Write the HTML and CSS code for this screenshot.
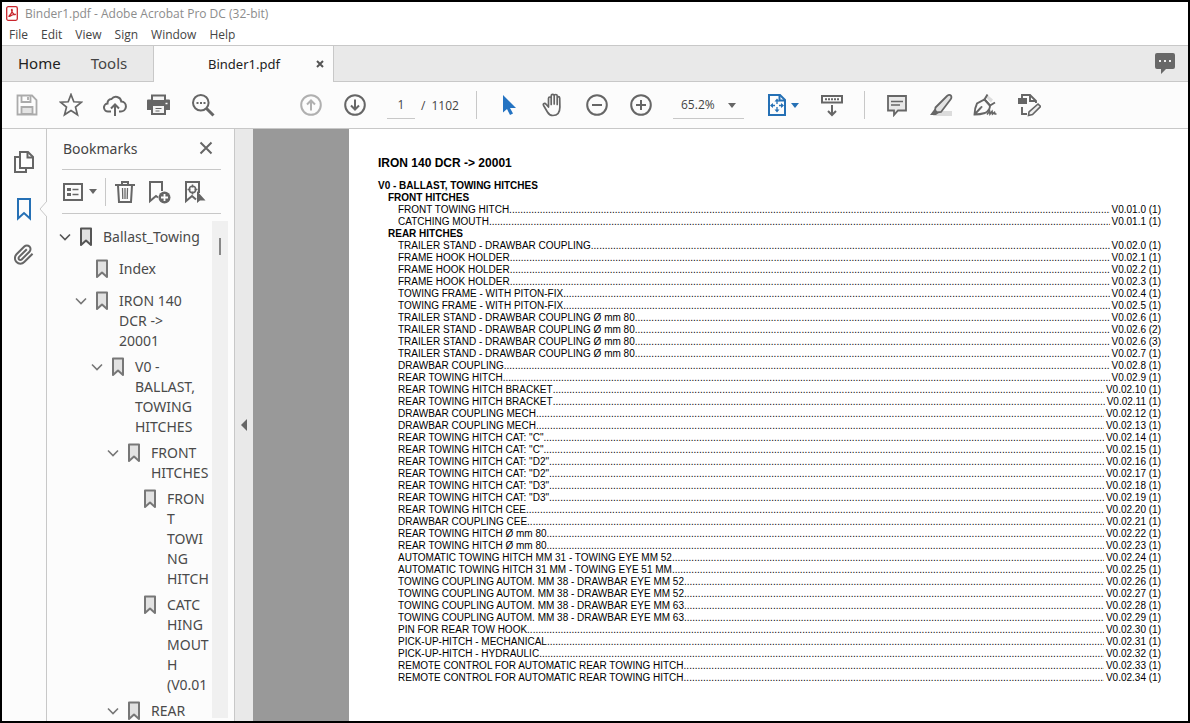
FILE: index.html
```html
<!DOCTYPE html>
<html lang="en">
<head>
<meta charset="utf-8">
<title>Binder1.pdf - Adobe Acrobat Pro DC (32-bit)</title>
<link rel="stylesheet" href="styles.css">
</head>
<body>
<svg class="sprite" aria-hidden="true">
  <symbol id="mark" viewBox="0 0 14 20"><path d="M2 1.500h10v16.500l-5-4.500-5 4.500z" fill="#e2e2e2" stroke="currentColor" stroke-width="2" stroke-linejoin="round"/></symbol>
  <symbol id="chev" viewBox="0 0 12 8"><path d="M1 1.500l5 5 5-5" fill="none" stroke="currentColor" stroke-width="1.600"/></symbol>
  <symbol id="caret" viewBox="0 0 8 5"><path d="M0 0h8l-4 5z" fill="currentColor"/></symbol>
</svg>
<div class="window">
  <header class="titlebar">
    <svg class="logo" viewBox="0 0 12 15"><rect x=".7" y=".7" width="10.600" height="13.600" rx="1.500" fill="#fff" stroke="#c9252d" stroke-width="1.300"/><path d="M6 3.300c.8 1.500-.6 4.300-3 7 .7.700 2.300-1.900 6.300-1.900-.2 1-3.500-1.400-3.800-4.300 0-.6.300-.8.500-.8z" fill="none" stroke="#c9252d" stroke-width="1.300"/></svg>
    <span>Binder1.pdf - Adobe Acrobat Pro DC (32-bit)</span>
  </header>
  <nav class="menubar" aria-label="Menu">
    <button>File</button><button>Edit</button><button>View</button><button>Sign</button><button>Window</button><button>Help</button>
  </nav>
  <div class="tabs">
    <div class="tabs-main"><button class="home">Home</button><button>Tools</button></div>
    <div class="tab-file">
      <button class="tab-name">Binder1.pdf</button>
      <button class="tab-close" aria-label="Close tab"><svg width="8" height="8" viewBox="0 0 8 8"><path d="M1 1l6 6M7 1l-6 6" stroke="#555" stroke-width="2"/></svg></button>
    </div>
    <div class="tabs-rest">
      <button aria-label="Comments"><svg width="20" height="21" viewBox="0 0 20 21"><path d="M2 0h16q2 0 2 2v12q0 2-2 2h-7l-5 5v-5h-4q-2 0-2-2v-12q0-2 2-2z" fill="#686868"/><path d="M4 7h2v2h-2zM9 7h2v2h-2zM14 7h2v2h-2z" fill="#eee"/></svg></button>
    </div>
  </div>

  <div class="toolbar">
    <div class="group">
      <button class="tool" aria-label="Save"><svg viewBox="0 0 24 24" fill="none" stroke="#ababab" stroke-width="1.800"><path d="M2.500 2.500h14.500l4.500 4.500v14.500h-19z"/><path d="M6.500 3v6h9v-6M13 4v3"/><path d="M6.500 21v-7h11v7z" fill="#e4e4e4"/></svg></button>
      <button class="tool" aria-label="Star"><svg viewBox="0 0 24 24" fill="none" stroke="#666" stroke-width="1.700"><path d="M12 1.500l2.800 7.300 7.700.4-6 4.900 2 7.700-6.500-4.300-6.500 4.300 2-7.700-6-4.900 7.700-.4z"/></svg></button>
      <button class="tool" aria-label="Upload"><svg viewBox="0 0 24 24" fill="none" stroke="#666" stroke-width="2"><path d="M8 18.500h-2.500a4 4 0 0 1-1-8 4.500 4.500 0 0 1 4-4.500 5.500 5.500 0 0 1 9.800 2.500 5 5 0 0 1-.8 10h-1.500"/><path d="M12 23v-11M8 15.500l4-4 4 4"/></svg></button>
      <button class="tool" aria-label="Print"><svg viewBox="0 0 24 24"><path d="M4 1.500h15v5h3q1 0 1 1v9.500h-4v5h-15v-5h-4v-9.500q0-1 1-1h3z" fill="#666"/><path d="M6 3.500h11v3.500h-11zM6 13h11v7h-11z" fill="#f4f4f4"/><path d="M8.500 15.500h6M8.500 18h4" stroke="#666" stroke-width="1"/><path d="M18.500 10.500h2" stroke="#fff" stroke-width="1.500"/></svg></button>
      <button class="tool" aria-label="Find"><svg viewBox="0 0 24 24" fill="none" stroke="#666"><circle cx="9.800" cy="9.800" r="7.800" stroke-width="2"/><path d="M15.500 15.500l7 7" stroke-width="3"/><path d="M5.500 10h2M9 10h2M12.500 10h2" stroke-width="2"/></svg></button>
    </div>
    <div class="group paging">
      <button class="tool" aria-label="Previous page"><svg viewBox="0 0 24 24" fill="none" stroke="#b0b0b0" stroke-width="2"><circle cx="12" cy="12" r="9.800"/><path d="M12 17.500v-10M8 11.500l4-4 4 4"/></svg></button>
      <button class="tool" aria-label="Next page"><svg viewBox="0 0 24 24" fill="none" stroke="#666" stroke-width="2"><circle cx="12" cy="12" r="9.800"/><path d="M12 6.500v10M8 12.500l4 4 4-4"/></svg></button>
      <input class="page-no" type="text" value="1" aria-label="Page number">
      <span class="page-sep">/</span><span>1102</span>
    </div>
    <div class="group ruled">
      <button class="tool" aria-label="Select"><svg viewBox="0 0 24 24"><path d="M6 2v17.500l4-3.500 3 6 3-1.500-3-5.500h6z" fill="#2473c2"/></svg></button>
      <button class="tool" aria-label="Pan"><svg viewBox="0 0 24 24" fill="none" stroke="#666" stroke-width="1.700" stroke-linecap="round" stroke-linejoin="round"><path d="M6.500 14v-8.500q0-1.500 1.300-1.500t1.400 1.500v6-8.500q0-1.600 1.500-1.600t1.500 1.600v8-8q0-1.500 1.500-1.500t1.500 1.500v8.500-6.500q0-1.300 1.200-1.300t1.300 1.300l.2 9q0 8.500-7 8.500-3.500 0-5.500-3.500l-3.800-6.500q-.8-1.500.5-2 1.200-.3 2.200 1z" transform="translate(1 0)"/></svg></button>
      <button class="tool" aria-label="Zoom out"><svg viewBox="0 0 24 24" fill="none" stroke="#666" stroke-width="2"><circle cx="12" cy="12" r="9.800"/><path d="M7 12h10"/></svg></button>
      <button class="tool" aria-label="Zoom in"><svg viewBox="0 0 24 24" fill="none" stroke="#666" stroke-width="2"><circle cx="12" cy="12" r="9.800"/><path d="M7 12h10M12 7v10"/></svg></button>
      <div class="zoom"><select aria-label="Zoom level"><option>65.2%</option></select><svg class="caret"><use href="#caret"/></svg></div>
      <button class="tool fit" aria-label="Fit page"><svg viewBox="0 0 24 24" fill="none" stroke="#2570b5" stroke-width="2"><path d="M4 2h11l5 5v15h-16z"/><path d="M14.500 2v5.500h5.500"/><path d="M12 7v4M12 14v4M6 12.500h4M14 12.500h4" stroke-width="1.300"/><path d="M12 5.500l2.500 3h-5zM12 19.500l2.500-3h-5zM5 12.500l3-2.500v5zM19 12.500l-3-2.500v5z" fill="#2570b5" stroke="none"/></svg><svg class="caret"><use href="#caret"/></svg></button>
      <button class="tool" aria-label="Scroll mode"><svg viewBox="0 0 24 24" fill="none" stroke="#666" stroke-width="2"><path d="M2 3h20v6.500h-20z"/><path d="M5 6.300h14" stroke-dasharray="2 1"/><path d="M12 12v10M8 18l4 4 4-4"/></svg></button>
    </div>
    <div class="group ruled">
      <button class="tool" aria-label="Comment"><svg viewBox="0 0 24 24" fill="#e8e8e8" stroke="#666" stroke-width="1.800"><path d="M3 3h18v14.500h-8l-4 4.500v-4.500h-6z"/><path d="M6 8.500h12M6 12h9" stroke-width="1.300"/></svg></button>
      <button class="tool" aria-label="Highlight"><svg viewBox="0 0 24 24"><path d="M6 18h17v5h-19z" fill="#dcdcdc"/><path d="M6.500 14.500l11.500-11.500q2.500-2 4-.3 1 1.800-.5 3.800l-9.500 12.500-4 .5-2-2z" fill="#e3e3e3" stroke="#666" stroke-width="1.800"/><path d="M1 22l4.500-6 4 4-2.500 2z" fill="#666"/></svg></button>
      <button class="tool" aria-label="Sign"><svg viewBox="0 0 24 24" fill="none" stroke="#666" stroke-width="1.900"><path d="M14.500 2l5.500 4.500-2 3-5-5z" fill="#ddd" stroke="none"/><path d="M1.500 21.500q0-6 2.500-11l7.500-4 5.500 6q0 5-5 7.500-5 1.500-10.500 1.500zM1.500 21.500l6.500-7"/><path d="M14.500 1.500l-3 5 5.500 6 5-3"/><circle cx="8.500" cy="14" r="1" fill="#666" stroke="none"/><path d="M14 21.500l2.500-3.500.5 3 2-2.500.5 2.500 2-1.500.5 1.500h1.500" stroke-width="1.700"/></svg></button>
      <button class="tool" aria-label="Edit PDF"><svg viewBox="0 0 24 24" fill="none" stroke="#666" stroke-width="1.900"><path d="M5 6v-4h8l6 6v2M13 2v6h6M5 14v7h5"/><path d="M1 5h9v6h-9z" fill="#666" stroke="none"/><path d="M11.500 22.500l.5-3.500 9-8 2.500 2.500-8 8z" fill="#eee" stroke-width="1.600"/></svg></button>
    </div>
  </div>

  <div class="body">
    <nav class="rail" aria-label="Panels">
      <button aria-label="Page thumbnails"><svg width="20" height="24" viewBox="0 0 20 24" fill="none" stroke="#666" stroke-width="2"><path d="M5 7h-4v15h11v-3"/><path d="M6 2h8l5 5v11h-13z" fill="#fff"/><path d="M13.500 2v5.500h5.500"/></svg></button>
      <button class="on" aria-label="Bookmarks"><svg width="16" height="24" viewBox="0 0 16 24" fill="none" stroke="#2570b5" stroke-width="2"><path d="M2 2h12v19.500l-6-5.500-6 5.500z"/></svg></button>
      <button aria-label="Attachments"><svg width="20" height="22" viewBox="1 1 22 23" fill="none" stroke="#666" stroke-width="2.200"><path d="M21.440 11.050l-9.190 9.190a6 6 0 0 1-8.490-8.490l8.570-8.570A4 4 0 1 1 18 8.840l-8.590 8.570a2 2 0 0 1-2.830-2.830l8.490-8.480"/></svg></button>
    </nav>
    <aside class="panel">
      <svg class="notch" width="8" height="16" viewBox="0 0 8 16"><path d="M8 0l-7 8 7 8" fill="#fcfcfc" stroke="#c8c8c8"/></svg>
      <div class="panel-head"><h2>Bookmarks</h2><button aria-label="Close panel"><svg width="14" height="14" viewBox="0 0 14 14"><path d="M1.500 1.500l11 11M12.500 1.500l-11 11" stroke="#666" stroke-width="2"/></svg></button></div>
      <div class="panel-tools">
        <button class="options" aria-label="Options"><svg width="20" height="18" viewBox="0 0 20 18"><path d="M1 1h18v16h-18z" fill="none" stroke="#666" stroke-width="2"/><path d="M4 5h4v3h-4zM4 10h4v3h-4z" fill="#666"/><path d="M9.500 6.500h6M9.500 11.500h6" stroke="#666" stroke-width="1.500"/></svg><svg class="caret"><use href="#caret"/></svg></button>
        <button class="bin" aria-label="Delete"><svg width="20" height="24" viewBox="0 0 20 24" fill="none" stroke="#666" stroke-width="2"><path d="M0 5h20M7 4.500v-2.500h6v2.500M3 5.500l1 16.500h12l1-16.500"/><path d="M7.500 8l.3 11M10 8v11M12.500 8l-.3 11" stroke-width="1.300"/></svg></button>
        <button aria-label="New bookmark"><svg width="24" height="24" viewBox="0 0 24 24"><path d="M15 11v-9h-12v19l6-5 2 1.500" fill="none" stroke="#666" stroke-width="2"/><circle cx="17.500" cy="17.500" r="6" fill="#666"/><path d="M14 17.500h7M17.500 14v7" stroke="#fff" stroke-width="1.800"/></svg></button>
        <button aria-label="Find bookmark"><svg width="24" height="24" viewBox="0 0 24 24" fill="none" stroke="#666"><path d="M16 13v-11h-13v19l6-5 4 3.500" stroke-width="2"/><circle cx="9.500" cy="9.500" r="3.200" stroke-width="1.500"/><path d="M9.500 4.500v3M9.500 11.500v3M4.500 9.500h3M11.500 9.500h3" stroke-width="1.500"/><path d="M14 11v12l3-2.500h5.500z" fill="#666" stroke="none"/></svg></button>
      </div>
      <div class="tree-area">
        <ul class="tree">
          <li class="l1 dark"><svg class="chev"><use href="#chev"/></svg><svg class="mark"><use href="#mark"/></svg><a href="#">Ballast_Towing</a></li>
          <li class="l2"><span class="chev"></span><svg class="mark"><use href="#mark"/></svg><a href="#">Index</a></li>
          <li class="l2"><svg class="chev"><use href="#chev"/></svg><svg class="mark"><use href="#mark"/></svg><a href="#">IRON 140<br>DCR -&gt;<br>20001</a></li>
          <li class="l3"><svg class="chev"><use href="#chev"/></svg><svg class="mark"><use href="#mark"/></svg><a href="#">V0 -<br>BALLAST,<br>TOWING<br>HITCHES</a></li>
          <li class="l4"><svg class="chev"><use href="#chev"/></svg><svg class="mark"><use href="#mark"/></svg><a href="#">FRONT<br>HITCHES</a></li>
          <li class="l5"><span class="chev"></span><svg class="mark"><use href="#mark"/></svg><a href="#">FRON<br>T<br>TOWI<br>NG<br>HITCH</a></li>
          <li class="l5"><span class="chev"></span><svg class="mark"><use href="#mark"/></svg><a href="#">CATC<br>HING<br>MOUT<br>H<br>(V0.01</a></li>
          <li class="l4"><svg class="chev"><use href="#chev"/></svg><svg class="mark"><use href="#mark"/></svg><a href="#">REAR</a></li>
        </ul>
        <div class="scroll"><span class="thumb"></span></div>
      </div>
    </aside>
    <button class="collapse" aria-label="Collapse panel"><svg width="6" height="12" viewBox="0 0 6 12"><path d="M6 0v12l-6-6z" fill="#666"/></svg></button>
    <main class="canvas">
      <article class="page">
        <h1>IRON 140 DCR -&gt; 20001</h1>
        <h2>V0 - BALLAST, TOWING HITCHES</h2>
        <h3>FRONT HITCHES</h3>
        <ul class="toc">
          <li><span>FRONT TOWING HITCH</span><b>V0.01.0 (1)</b></li>
          <li><span>CATCHING MOUTH</span><b>V0.01.1 (1)</b></li>
        </ul>
        <h3>REAR HITCHES</h3>
        <ul class="toc">
          <li><span>TRAILER STAND - DRAWBAR COUPLING</span><b>V0.02.0 (1)</b></li>
          <li><span>FRAME HOOK HOLDER</span><b>V0.02.1 (1)</b></li>
          <li><span>FRAME HOOK HOLDER</span><b>V0.02.2 (1)</b></li>
          <li><span>FRAME HOOK HOLDER</span><b>V0.02.3 (1)</b></li>
          <li><span>TOWING FRAME - WITH PITON-FIX</span><b>V0.02.4 (1)</b></li>
          <li><span>TOWING FRAME - WITH PITON-FIX</span><b>V0.02.5 (1)</b></li>
          <li><span>TRAILER STAND - DRAWBAR COUPLING Ø mm 80</span><b>V0.02.6 (1)</b></li>
          <li><span>TRAILER STAND - DRAWBAR COUPLING Ø mm 80</span><b>V0.02.6 (2)</b></li>
          <li><span>TRAILER STAND - DRAWBAR COUPLING Ø mm 80</span><b>V0.02.6 (3)</b></li>
          <li><span>TRAILER STAND - DRAWBAR COUPLING Ø mm 80</span><b>V0.02.7 (1)</b></li>
          <li><span>DRAWBAR COUPLING</span><b>V0.02.8 (1)</b></li>
          <li><span>REAR TOWING HITCH</span><b>V0.02.9 (1)</b></li>
          <li><span>REAR TOWING HITCH BRACKET</span><b>V0.02.10 (1)</b></li>
          <li><span>REAR TOWING HITCH BRACKET</span><b>V0.02.11 (1)</b></li>
          <li><span>DRAWBAR COUPLING MECH</span><b>V0.02.12 (1)</b></li>
          <li><span>DRAWBAR COUPLING MECH</span><b>V0.02.13 (1)</b></li>
          <li><span>REAR TOWING HITCH CAT: "C"</span><b>V0.02.14 (1)</b></li>
          <li><span>REAR TOWING HITCH CAT: "C"</span><b>V0.02.15 (1)</b></li>
          <li><span>REAR TOWING HITCH CAT: "D2"</span><b>V0.02.16 (1)</b></li>
          <li><span>REAR TOWING HITCH CAT: "D2"</span><b>V0.02.17 (1)</b></li>
          <li><span>REAR TOWING HITCH CAT: "D3"</span><b>V0.02.18 (1)</b></li>
          <li><span>REAR TOWING HITCH CAT: "D3"</span><b>V0.02.19 (1)</b></li>
          <li><span>REAR TOWING HITCH CEE</span><b>V0.02.20 (1)</b></li>
          <li><span>DRAWBAR COUPLING CEE</span><b>V0.02.21 (1)</b></li>
          <li><span>REAR TOWING HITCH Ø mm 80</span><b>V0.02.22 (1)</b></li>
          <li><span>REAR TOWING HITCH Ø mm 80</span><b>V0.02.23 (1)</b></li>
          <li><span>AUTOMATIC TOWING HITCH MM 31 - TOWING EYE MM 52</span><b>V0.02.24 (1)</b></li>
          <li><span>AUTOMATIC TOWING HITCH 31 MM - TOWING EYE 51 MM</span><b>V0.02.25 (1)</b></li>
          <li><span>TOWING COUPLING AUTOM. MM 38 - DRAWBAR EYE MM 52</span><b>V0.02.26 (1)</b></li>
          <li><span>TOWING COUPLING AUTOM. MM 38 - DRAWBAR EYE MM 52</span><b>V0.02.27 (1)</b></li>
          <li><span>TOWING COUPLING AUTOM. MM 38 - DRAWBAR EYE MM 63</span><b>V0.02.28 (1)</b></li>
          <li><span>TOWING COUPLING AUTOM. MM 38 - DRAWBAR EYE MM 63</span><b>V0.02.29 (1)</b></li>
          <li><span>PIN FOR REAR TOW HOOK</span><b>V0.02.30 (1)</b></li>
          <li><span>PICK-UP-HITCH - MECHANICAL</span><b>V0.02.31 (1)</b></li>
          <li><span>PICK-UP-HITCH - HYDRAULIC</span><b>V0.02.32 (1)</b></li>
          <li><span>REMOTE CONTROL FOR AUTOMATIC REAR TOWING HITCH</span><b>V0.02.33 (1)</b></li>
          <li><span>REMOTE CONTROL FOR AUTOMATIC REAR TOWING HITCH</span><b>V0.02.34 (1)</b></li>
        </ul>
      </article>
    </main>
  </div>
</div>
</body>
</html>
```
FILE: styles.css
```css
* { box-sizing: border-box; }
body { margin: 0; font-family: "Open Sans", "Noto Sans", sans-serif; font-size: 12px; color: #444; }
button, input, select { font: inherit; color: inherit; border: 0; background: none; padding: 0; margin: 0; }
h1, h2, h3, ul { margin: 0; padding: 0; font-weight: 400; list-style: none; }
svg { display: block; flex: none; }
.sprite { position: absolute; width: 0; height: 0; }
.caret { width: 8px; height: 5px; }

.window { height: 100vh; display: flex; flex-direction: column; overflow: hidden; border: 2px solid #000; background: #fcfcfc; }
.titlebar { display: flex; align-items: center; gap: 7px; height: 23px; flex: none; padding-left: 4px; background: #fff; color: #8c8c8c; }
.logo { width: 12px; height: 15px; }
.menubar { display: flex; align-items: center; gap: 13px; height: 20px; flex: none; padding: 0 0 2px 7px; background: #fff; }

.tabs { display: flex; height: 37px; flex: none; border-top: 1px solid #c8c8c8; }
.tabs-main { display: flex; gap: 30px; width: 152px; padding-left: 16px; padding-bottom: 2px; background: #e9e9e9; border-right: 1px solid #c8c8c8; border-bottom: 1px solid #c8c8c8; font: 15px "Noto Sans", sans-serif; }
.home { color: #222; }
.tab-file { display: flex; width: 180px; padding-left: 54px; padding-right: 9px; justify-content: space-between; border-right: 1px solid #c8c8c8; font: 13px "Noto Sans", sans-serif; color: #222; }
.tabs-rest { display: flex; flex: 1; justify-content: flex-end; align-items: center; padding-right: 13px; background: #e9e9e9; border-bottom: 1px solid #c8c8c8; }

.toolbar { display: flex; align-items: center; height: 47px; flex: none; padding-left: 3px; border-bottom: 1px solid #c8c8c8; }
.group { display: flex; align-items: center; flex: none; height: 28px; }
.tool { display: flex; align-items: center; justify-content: center; flex: none; width: 44px; height: 28px; }
.tool svg:first-child { width: 24px; height: 24px; }
.paging { width: 171px; margin-left: 64px; white-space: nowrap; }
.page-no { width: 28px; height: 28px; margin-left: 10px; border-bottom: 1px solid #c8c8c8; text-align: center; }
.page-sep { margin: 0 6px; }
.ruled { margin-left: 10px; padding-left: 10px; border-left: 1px solid #c8c8c8; }
.paging + .ruled { margin-left: 16px; }
.zoom { position: relative; width: 71px; height: 28px; margin: 0 10px; border-bottom: 1px solid #c8c8c8; }
.zoom select { appearance: none; width: 100%; height: 27px; padding-left: 8px; }
.zoom .caret { position: absolute; right: 8px; top: 12px; pointer-events: none; color: #666; }
.fit { width: 56px; gap: 2px; color: #2570b5; }

.body { display: flex; flex: 1; min-height: 0; }
.rail { display: flex; flex-direction: column; align-items: center; gap: 23px; width: 44px; flex: none; padding-top: 21px; }
.panel { position: relative; display: flex; flex-direction: column; width: 189px; flex: none; padding-left: 15px; border: solid #c8c8c8; border-width: 0 1px; }
.notch { position: absolute; left: -8px; top: 72px; }
.panel-head { display: flex; align-items: center; justify-content: space-between; height: 41px; flex: none; margin-right: 13px; padding: 0 8px 2px 1px; border-bottom: 1px solid #c8c8c8; }
.panel-head h2 { font: 14px "Noto Sans", sans-serif; }
.panel-tools { display: flex; align-items: center; height: 44px; flex: none; margin-right: 13px; gap: 12px; border-bottom: 1px solid #c8c8c8; }
.options { display: flex; align-items: center; gap: 6px; width: 44px; height: 28px; padding-left: 1px; border-right: 1px solid #c8c8c8; color: #666; }
.bin { margin-left: -3px; }
.tree-area { display: flex; flex: 1; min-height: 0; padding: 7px 6px 0 0; }
.tree { flex: 1; margin-left: -3px; padding-top: 6px; font: 14px/20px "Noto Sans", sans-serif; }
.tree li { display: flex; min-height: 26px; margin-bottom: 6px; color: #777; }
.tree .dark { color: #555; }
.tree li:last-child { min-height: 0; margin-bottom: 0; }
.tree a { color: #4a4a4a; text-decoration: none; white-space: nowrap; }
.chev { width: 12px; height: 8px; margin: 6px 8px 0 0; flex: none; }
.mark { width: 14px; height: 20px; margin-right: 10px; }
.l2 { padding-left: 16px; }
.l3 { padding-left: 32px; }
.l4 { padding-left: 48px; }
.l5 { padding-left: 64px; }
.scroll { width: 16px; flex: none; margin-bottom: 3px; padding: 17px 7px; background: #f0f0f0; }
.thumb { display: block; width: 2px; height: 17px; background: #888; }
.collapse { display: flex; align-items: center; justify-content: center; width: 18px; flex: none; background: #e9e9e9; }

.canvas { display: flex; flex: 1; min-width: 0; padding-left: 96px; background: #999; }
.page { flex: 1; min-width: 0; padding: 27px 27px 0 29px; background: #fff; color: #000; font: 10px/12px "Liberation Sans", Arial, sans-serif; }
.page h1 { font-size: 12px; line-height: 14px; font-weight: 700; margin-bottom: 10px; }
.page h2, .page h3 { font-size: 10px; font-weight: 700; }
.page h3 { padding-left: 10px; }
.toc { padding-left: 20px; }
.toc li { display: flex; white-space: nowrap; }
.toc b { font-weight: 400; order: 3; }
.toc li::after { order: 2; flex: 1; width: 0; margin-right: 2px; overflow: hidden; content: "........................................................................................................................................................................................................................................................................................................................................................"; }
```
